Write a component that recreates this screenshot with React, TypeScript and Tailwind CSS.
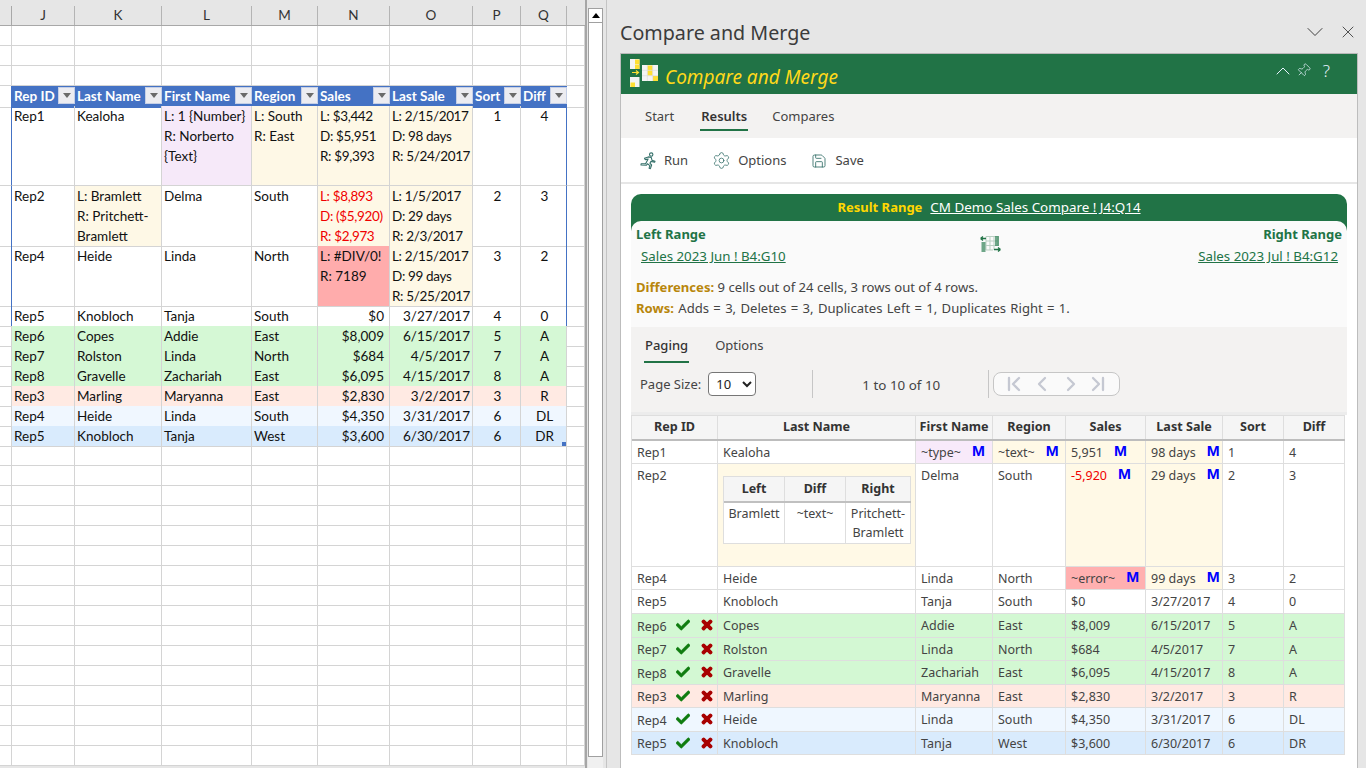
import { ReactElement, ReactNode } from 'react'
import {
  ChevronDown,
  ChevronFirst,
  ChevronLast,
  ChevronLeft,
  ChevronRight,
  ChevronUp,
  Pin,
  Save,
  Settings,
  X,
} from 'lucide-react'
import { FaCheck, FaTimes } from 'react-icons/fa'

const sheetCols =
  'grid grid-cols-[12px_63px_87px_90px_66px_72px_83px_48px_46px_18px]'
const tableCols = 'grid grid-cols-[86px_198px_77px_73px_80px_77px_61px_61px]'

interface SheetCell {
  lines: string[]
  bg?: string
  text?: string
  align?: string
}

const c = (
  value: string | string[],
  bg = '',
  align = '',
  text = '',
): SheetCell => ({
  lines: Array.isArray(value) ? value : [value],
  bg,
  align,
  text,
})

const yellow = 'bg-[#fef8e6]'
const center = 'text-center'
const right = 'text-right pr-[5px]'
const tight = 'tracking-[-0.35px]'

const sheetTop: { h: string; cells: SheetCell[] }[] = [
  {
    h: 'h-[80px]',
    cells: [
      c('Rep1'),
      c('Kealoha'),
      c(['L: 1 {Number}', 'R: Norberto', '{Text}'], 'bg-[#f6e9f9]'),
      c(['L: South', 'R: East'], yellow),
      c(['L: $3,442', 'D: $5,951', 'R: $9,393'], yellow, tight),
      c(['L: 2/15/2017', 'D: 98 days', 'R: 5/24/2017'], yellow, tight),
      c('1', '', center),
      c('4', '', center),
    ],
  },
  {
    h: 'h-[60px]',
    cells: [
      c('Rep2'),
      c(['L: Bramlett', 'R: Pritchett-', 'Bramlett'], yellow),
      c('Delma'),
      c('South'),
      c(['L: $8,893', 'D: ($5,920)', 'R: $2,973'], yellow, tight, 'text-[#f00000]'),
      c(['L: 1/5/2017', 'D: 29 days', 'R: 2/3/2017'], yellow, tight),
      c('2', '', center),
      c('3', '', center),
    ],
  },
  {
    h: 'h-[60px]',
    cells: [
      c('Rep4'),
      c('Heide'),
      c('Linda'),
      c('North'),
      c(['L: #DIV/0!', 'R: 7189'], 'bg-[#ffacac]'),
      c(['L: 2/15/2017', 'D: 99 days', 'R: 5/25/2017'], yellow, tight),
      c('3', '', center),
      c('2', '', center),
    ],
  },
  {
    h: 'h-[20px]',
    cells: [
      c('Rep5'),
      c('Knobloch'),
      c('Tanja'),
      c('South'),
      c('$0', '', right),
      c('3/27/2017', '', 'text-right pr-[2px]'),
      c('4', '', center),
      c('0', '', center),
    ],
  },
]

const sheetBottom: { bg: string; values: string[] }[] = [
  { bg: 'bg-[#d5f8d5]', values: ['Rep6', 'Copes', 'Addie', 'East', '$8,009', '6/15/2017', '5', 'A'] },
  { bg: 'bg-[#d5f8d5]', values: ['Rep7', 'Rolston', 'Linda', 'North', '$684', '4/5/2017', '7', 'A'] },
  { bg: 'bg-[#d5f8d5]', values: ['Rep8', 'Gravelle', 'Zachariah', 'East', '$6,095', '4/15/2017', '8', 'A'] },
  { bg: 'bg-[#ffeae3]', values: ['Rep3', 'Marling', 'Maryanna', 'East', '$2,830', '3/2/2017', '3', 'R'] },
  { bg: 'bg-[#f0f7ff]', values: ['Rep4', 'Heide', 'Linda', 'South', '$4,350', '3/31/2017', '6', 'DL'] },
  { bg: 'bg-[#d9ebfd]', values: ['Rep5', 'Knobloch', 'Tanja', 'West', '$3,600', '6/30/2017', '6', 'DR'] },
]

const Blank = ({ className = '' }: { className?: string }): ReactElement => (
  <div className={`border-r border-b border-[#d4d4d4] ${className}`} />
)

const EmptyRow = (): ReactElement => (
  <div className={`${sheetCols} h-[20px]`}>
    {Array.from({ length: 10 }).map((_, i) => (
      <Blank key={i} />
    ))}
  </div>
)

const FilterButton = (): ReactElement => (
  <span className="flex h-[17px] w-[17px] shrink-0 items-center justify-center border border-[#c5cfe6] bg-[#ececf1]">
    <span className="h-0 w-0 border-x-[4.5px] border-t-[5px] border-x-transparent border-t-[#6a6a6a]" />
  </span>
)

const Sheet = (): ReactElement => {
  const letters = ['J', 'K', 'L', 'M', 'N', 'O', 'P', 'Q']
  const headers = [
    'Rep ID',
    'Last Name',
    'First Name',
    'Region',
    'Sales',
    'Last Sale',
    'Sort',
    'Diff',
  ]

  return (
    <div className="w-[585px] shrink-0 font-['Lato',sans-serif] text-[13.5px] leading-[20px] text-[#111]">
      <div className="h-[6px] bg-[#e6e6e6]" />
      <div className={`${sheetCols} h-[20px] border-b border-[#a8a8a8] bg-[#e6e6e6]`}>
        <div className="border-r border-[#a8a8a8]" />
        {letters.map((l) => (
          <div
            key={l}
            className="border-r border-[#b4b4b4] text-center text-[13.5px] leading-[19px] text-[#333]"
          >
            {l}
          </div>
        ))}
        <div />
      </div>
      <div className="bg-white">
        <EmptyRow />
        <EmptyRow />
        <EmptyRow />
        <div className={`${sheetCols} h-[20px]`}>
          <div className="border-r border-b border-r-[#4472c4] border-b-[#d4d4d4]" />
          {headers.map((h) => (
            <div
              key={h}
              className="flex items-start justify-between border-b border-[#4472c4] bg-[#4472c4] pl-[2px] font-bold text-white"
            >
              <span className="leading-[21px] whitespace-nowrap">{h}</span>
              <span className="pt-[1px]">
                <FilterButton />
              </span>
            </div>
          ))}
          <Blank />
        </div>
        {sheetTop.map((row, i) => (
          <div key={i} className={`${sheetCols} ${row.h}`}>
            <div className="border-r border-b border-r-[#4472c4] border-b-[#d4d4d4]" />
            {row.cells.map((cell, j) => (
              <div
                key={j}
                className={`border-b border-[#d4d4d4] pl-[2px] whitespace-nowrap ${
                  j === 7 ? 'border-r border-r-[#4472c4]' : 'border-r'
                } ${cell.bg} ${cell.align} ${cell.text}`}
              >
                {cell.lines.map((line) => (
                  <div key={line}>{line}</div>
                ))}
              </div>
            ))}
            <Blank />
          </div>
        ))}
        {sheetBottom.map((row, i) => (
          <div key={i} className={`${sheetCols} h-[20px]`}>
            <Blank />
            {row.values.map((v, j) => (
              <div
                key={j}
                className={`relative border-r border-b border-[#d4d4d4] pl-[2px] whitespace-nowrap ${row.bg} ${
                  j === 4 ? right : j === 5 ? 'pr-[2px] text-right' : j > 5 ? center : ''
                }`}
              >
                {v}
                {i === 5 && j === 7 && (
                  <span className="absolute right-0 bottom-0 h-[4px] w-[4px] bg-[#4472c4]" />
                )}
              </div>
            ))}
            <Blank />
          </div>
        ))}
        {Array.from({ length: 16 }).map((_, i) => (
          <EmptyRow key={i} />
        ))}
      </div>
    </div>
  )
}

const ScrollBar = (): ReactElement => (
  <div className="flex h-[768px] w-[21px] shrink-0 flex-col border-l-2 border-[#a6a6a6] pt-[8px] pl-[1px]">
    <div className="flex h-[15px] w-[15px] items-center justify-center border border-[#a0a0a0] bg-white">
      <span className="h-0 w-0 border-x-[4px] border-b-[5px] border-x-transparent border-b-black" />
    </div>
    <div className="h-[734px] w-[15px] border-x border-b border-[#a0a0a0] bg-white" />
    <div className="h-[11px] w-[15px] bg-[#f0f0f0]" />
  </div>
)

const RunIcon = (): ReactElement => (
  <svg width="18" height="18" viewBox="0 0 18 18" fill="none" stroke="#35706a" strokeWidth="1.1" strokeLinejoin="round">
    <circle cx="12.2" cy="2.6" r="1.7" />
    <path d="M5.5 6.2 L9.3 4.9 L12.2 5.4 L13 8.2 L16 9.2 L15.6 10.3 L12 9.4 L10.9 11.2 L12.6 13 L11.4 16.6 L10.1 16.2 L10.9 13.6 L8.4 11.8 L7.4 13.2 L2 13 L2.1 11.8 L6.6 11.8 L9.1 7 L6.2 7.6 Z" />
  </svg>
)

const LogoIcon = (): ReactElement => (
  <svg width="30" height="30" viewBox="0 0 30 30">
    <g fill="#f4f4f4">
      <rect x="0" y="0" width="9.5" height="10" />
      <rect x="0" y="18" width="9.5" height="10" />
      <rect x="12" y="6" width="16" height="16" />
    </g>
    <g fill="#ffe033">
      <rect x="5" y="0.5" width="4.5" height="4.5" />
      <rect x="5" y="5.5" width="4.5" height="4.5" />
      <rect x="0.5" y="23.5" width="4.5" height="4.5" />
      <rect x="17.5" y="6.5" width="5" height="5" />
      <rect x="17.5" y="11.5" width="5" height="5" />
      <rect x="23" y="17" width="5" height="5" />
    </g>
    <g stroke="#d8d8d8" strokeWidth="0.6">
      <path d="M17.3 6 V22 M22.7 6 V22 M12 11.3 H28 M12 16.7 H28" />
    </g>
    <path d="M2 13.5 H8 M6 11.5 L8.5 13.5 L6 15.5" stroke="#ffe033" strokeWidth="1.2" fill="none" />
  </svg>
)

const CompareIcon = (): ReactElement => (
  <svg width="21" height="18" viewBox="0 0 21 18" fill="none">
    <path d="M6 1.5 H18 M6 6 H18 M6 10.5 H18 M6 15 H13 M6 1.5 V15 M10 1.5 V15 M14 1.5 V15 M18 1.5 V11" stroke="#b9cfc2" strokeWidth="1" />
    <path d="M0.5 3.5 H6 M0.5 3.5 L3 1.5 M0.5 3.5 L3 5.5" stroke="#217346" strokeWidth="1.3" />
    <path d="M14 14.5 H20.5 M20.5 14.5 L18 12.5 M20.5 14.5 L18 16.5" stroke="#217346" strokeWidth="1.3" />
    <rect x="15" y="1" width="4" height="10" fill="#3f8a62" opacity="0.75" />
    <rect x="1.5" y="7" width="4" height="10" fill="#3f8a62" opacity="0.75" />
  </svg>
)

const PaneTitle = (): ReactElement => (
  <div className="flex h-[53px] shrink-0 items-end justify-between pr-[8px] pb-[7px]">
    <span className="text-[19.7px] leading-[26px] text-[#3b3b3b]">Compare and Merge</span>
    <span className="flex items-center gap-[9px] text-[#333]">
      <ChevronDown size={28} strokeWidth={0.8} />
      <X size={20} strokeWidth={1} />
    </span>
  </div>
)

const PaneHeader = (): ReactElement => (
  <>
    <div className="flex h-[41px] shrink-0 items-center border-t border-[#b8b8b8] bg-[#217346] pr-[27px] pl-[9px]">
      <LogoIcon />
      <span className="ml-[5px] pt-[6px] text-[19px] text-[#ffd91a] italic">Compare and Merge</span>
      <span className="ml-auto flex items-center pb-[7px] text-[#e8f4ff]">
        <ChevronUp size={24} strokeWidth={1} />
        <Pin size={15} strokeWidth={1.1} className="ml-[1px] rotate-45" />
        <span className="ml-[12px] text-[17px] leading-none font-light">?</span>
      </span>
    </div>
    <div className="flex h-[44px] shrink-0 bg-[#f3f2f1] pl-[24px] text-[13px] text-[#444]">
      <span className="mr-[26px] pt-[13px]">Start</span>
      <span className="mr-[24px] h-[37px] border-b-2 border-[#217346] px-[1px] pt-[13px] font-semibold text-[#333]">
        Results
      </span>
      <span className="pt-[13px]">Compares</span>
    </div>
    <div className="flex h-[46px] shrink-0 items-center border-b-2 border-[#e6e6e6] bg-white pt-[1px] pl-[18px] text-[13px] text-[#444]">
      <RunIcon />
      <span className="ml-[7px]">Run</span>
      <Settings size={19} strokeWidth={1} className="ml-[24px] text-[#35706a]" />
      <span className="ml-[7px]">Options</span>
      <Save size={16} strokeWidth={1.3} className="ml-[25px] text-[#35706a]" />
      <span className="ml-[8px]">Save</span>
    </div>
  </>
)

const Summary = (): ReactElement => (
  <>
    <div className="h-[38px] rounded-t-[10px] bg-[#217346] pt-[4px] text-center text-[13px] leading-[18px]">
      <span className="font-bold text-[#ffd700]">Result Range</span>
      <span className="ml-[8px] text-[13.4px] text-white underline">CM Demo Sales Compare ! J4:Q14</span>
    </div>
    <div className="-mt-[11px] h-[106px] rounded-t-[10px] bg-[#fafafa] px-[5px] text-[13.3px] text-[#444]">
      <div className="flex justify-between pt-[4px]">
        <div className="w-[300px]">
          <div className="text-[13px] leading-[18px] font-bold text-[#217346]">Left Range</div>
          <div className="mt-[4px] ml-[5px] leading-[18px] text-[#217346] underline">
            Sales 2023 Jun ! B4:G10
          </div>
        </div>
        <div className="pt-[10px] pl-[2px]">
          <CompareIcon />
        </div>
        <div className="w-[300px] text-right">
          <div className="text-[13px] leading-[18px] font-bold text-[#217346]">Right Range</div>
          <div className="mt-[4px] mr-[4px] leading-[18px] text-[#217346] underline">
            Sales 2023 Jul ! B4:G12
          </div>
        </div>
      </div>
      <div className="mt-[12px] text-[13.1px] leading-[21px]">
        <div>
          <span className="font-bold text-[#b8860b]">Differences:</span> 9 cells out of 24 cells, 3
          rows out of 4 rows.
        </div>
        <div className="[word-spacing:0.9px]">
          <span className="font-bold text-[#b8860b]">Rows:</span> Adds = 3, Deletes = 3, Duplicates
          Left = 1, Duplicates Right = 1.
        </div>
      </div>
    </div>
  </>
)

const Paging = (): ReactElement => (
  <div className="h-[85px] bg-[#f3f2f1] text-[13px] text-[#444]">
    <div className="flex pl-[13px]">
      <span className="mt-[8px] h-[28px] border-b-2 border-[#217346] px-[1px] pt-[1px] leading-[18px] font-medium text-[#333]">
        Paging
      </span>
      <span className="mt-[9px] ml-[26px] leading-[18px]">Options</span>
    </div>
    <div className="flex h-[42px] items-center pl-[9px]">
      <span className="pt-[2px]">Page Size:</span>
      <select
        defaultValue="10"
        className="ml-[7px] h-[24px] w-[48px] rounded-[4px] border border-[#767676] bg-white pl-[3px] text-[13px] text-[#222]"
      >
        <option>10</option>
      </select>
      <span className="mr-[49px] ml-[56px] h-[28px] border-l border-[#c6c6c6]" />
      <span className="w-[78px] pt-[2px] text-center text-[13.4px]">1 to 10 of 10</span>
      <span className="ml-[48px] h-[28px] border-l border-[#c6c6c6]" />
      <span className="ml-[4px] flex h-[24px] w-[127px] items-center rounded-[8px] border border-[#c6c6c6] bg-[#fafafa] pl-[8px] text-[#c5c8d2]">
        <ChevronFirst size={24} strokeWidth={2.3} />
        <ChevronLeft size={24} strokeWidth={2.3} className="ml-[4px]" />
        <ChevronRight size={24} strokeWidth={2.3} className="ml-[5px]" />
        <ChevronLast size={24} strokeWidth={2.3} className="ml-[3px]" />
      </span>
    </div>
  </div>
)

const Modified = ({ children }: { children: ReactNode }): ReactElement => (
  <>
    {children}
    <span className="relative -top-[1px] ml-[11px] font-['Liberation_Sans',sans-serif] text-[15.5px] leading-[20px] font-bold text-[#0000ff]">
      M
    </span>
  </>
)

const td =
  'border-r border-b border-[#dedede] pt-[1px] pl-[5px] whitespace-nowrap leading-[21px]'

const Pick = (): ReactElement => (
  <span className="relative -top-[1px] flex items-center">
    <FaCheck size={14} stroke="currentColor" strokeWidth={20} className="mr-[10px] ml-[9px] text-[#107c10]" />
    <FaTimes size={14} stroke="currentColor" strokeWidth={50} className="text-[#a80000]" />
  </span>
)

const bottomRows: { h: string; bg: string; v: string[] }[] = [
  { h: 'h-[24px]', bg: 'bg-[#d3f8d3]', v: ['Rep6', 'Copes', 'Addie', 'East', '$8,009', '6/15/2017', '5', 'A'] },
  { h: 'h-[23px]', bg: 'bg-[#d3f8d3]', v: ['Rep7', 'Rolston', 'Linda', 'North', '$684', '4/5/2017', '7', 'A'] },
  { h: 'h-[24px]', bg: 'bg-[#d3f8d3]', v: ['Rep8', 'Gravelle', 'Zachariah', 'East', '$6,095', '4/15/2017', '8', 'A'] },
  { h: 'h-[23px]', bg: 'bg-[#ffe9e2]', v: ['Rep3', 'Marling', 'Maryanna', 'East', '$2,830', '3/2/2017', '3', 'R'] },
  { h: 'h-[24px]', bg: 'bg-[#eff7ff]', v: ['Rep4', 'Heide', 'Linda', 'South', '$4,350', '3/31/2017', '6', 'DL'] },
  { h: 'h-[23px]', bg: 'bg-[#d9ebfd]', v: ['Rep5', 'Knobloch', 'Tanja', 'West', '$3,600', '6/30/2017', '6', 'DR'] },
]

const NestedDiff = (): ReactElement => (
  <div className="mt-[12px] ml-[5px] w-[188px] border-t border-l border-[#dedede] text-center whitespace-normal">
    <div className="grid h-[26px] grid-cols-[61px_61px_65px] border-b-[2px] border-[#c0c0c0] bg-[#f5f5f5] leading-[24px] font-bold text-[#333]">
      <div className="border-r border-[#dedede]">Left</div>
      <div className="border-r border-[#dedede]">Diff</div>
      <div className="border-r border-[#dedede]">Right</div>
    </div>
    <div className="grid h-[41px] grid-cols-[61px_61px_65px] border-b border-[#dedede] bg-white leading-[19px]">
      <div className="border-r border-[#dedede] pt-[1px]">Bramlett</div>
      <div className="border-r border-[#dedede] pt-[1px]">~text~</div>
      <div className="border-r border-[#dedede] pt-[1px]">
        Pritchett-
        <br />
        Bramlett
      </div>
    </div>
  </div>
)

const ResultTable = (): ReactElement => {
  const heads = ['Rep ID', 'Last Name', 'First Name', 'Region', 'Sales', 'Last Sale', 'Sort', 'Diff']
  const y = 'bg-[#fff9e6]'
  return (
    <div className="w-[714px] border-t-[1px] border-l border-[#dedede] text-[12.5px] text-[#444]">
      <div className={`${tableCols} h-[25px] border-b-[2px] border-[#bdbdbd] bg-[#f5f5f5]`}>
        {heads.map((h) => (
          <div key={h} className="border-r border-[#dedede] text-center text-[12.6px] leading-[22px] font-bold text-[#333]">
            {h}
          </div>
        ))}
      </div>
      <div className={`${tableCols} h-[23px]`}>
        <div className={td}>Rep1</div>
        <div className={td}>Kealoha</div>
        <div className={`${td} bg-[#f8eafa]`}><Modified>~type~</Modified></div>
        <div className={`${td} ${y}`}><Modified>~text~</Modified></div>
        <div className={`${td} ${y}`}><Modified>5,951</Modified></div>
        <div className={`${td} ${y}`}><Modified>98 days</Modified></div>
        <div className={td}>1</div>
        <div className={td}>4</div>
      </div>
      <div className={`${tableCols} h-[103px]`}>
        <div className={td}>Rep2</div>
        <div className={`border-r border-b border-[#dedede] ${y}`}><NestedDiff /></div>
        <div className={td}>Delma</div>
        <div className={td}>South</div>
        <div className={`${td} ${y}`}><Modified><span className="text-[#f00000]">-5,920</span></Modified></div>
        <div className={`${td} ${y}`}><Modified>29 days</Modified></div>
        <div className={td}>2</div>
        <div className={td}>3</div>
      </div>
      <div className={`${tableCols} h-[23px]`}>
        <div className={td}>Rep4</div>
        <div className={td}>Heide</div>
        <div className={td}>Linda</div>
        <div className={td}>North</div>
        <div className={`${td} bg-[#ffb0b0]`}><Modified>~error~</Modified></div>
        <div className={`${td} ${y}`}><Modified>99 days</Modified></div>
        <div className={td}>3</div>
        <div className={td}>2</div>
      </div>
      <div className={`${tableCols} h-[24px]`}>
        {['Rep5', 'Knobloch', 'Tanja', 'South', '$0', '3/27/2017', '4', '0'].map((v, i) => (
          <div key={i} className={td}>{v}</div>
        ))}
      </div>
      {bottomRows.map((row, i) => (
        <div key={i} className={`${tableCols} ${row.h}`}>
          {row.v.map((v, j) => (
            <div key={j} className={`${td} ${row.bg} ${j === 0 ? 'flex items-center' : ''}`}>
              {v}
              {j === 0 && <Pick />}
            </div>
          ))}
        </div>
      ))}
    </div>
  )
}

const App = (): ReactElement => (
  <div className="flex h-[768px] w-[1366px] overflow-hidden bg-[#e6e6e6] font-['Noto_Sans',sans-serif]">
    <Sheet />
    <ScrollBar />
    <div className="w-[14px] shrink-0 border-l border-[#c4c4c4]" />
    <div className="flex w-[746px] shrink-0 flex-col">
      <PaneTitle />
      <div className="mr-[8px] flex flex-1 flex-col border-x border-[#bdbdbd] bg-white">
        <PaneHeader />
        <div className="flex-1 px-[10px] pt-[10px]">
          <Summary />
          <Paging />
          <div className="h-0 border-t-[3px] border-[#ececec]" />
          <ResultTable />
        </div>
      </div>
    </div>
  </div>
)

export default App
